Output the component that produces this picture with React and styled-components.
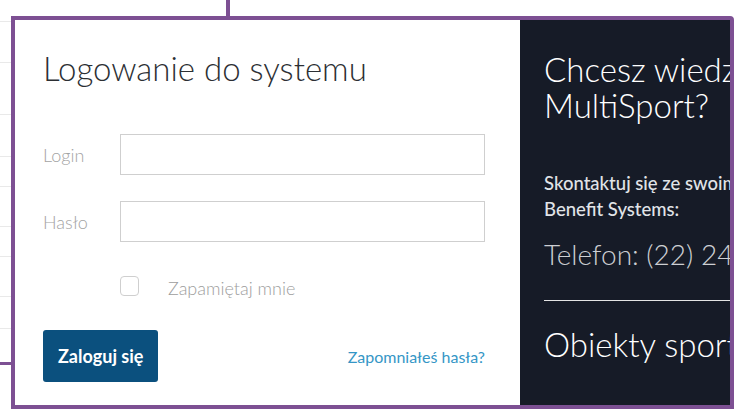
import React from "react";
import styled, { createGlobalStyle } from "styled-components";

const purple = "#7d5093";

const GlobalStyle = createGlobalStyle`
  html, body {
    margin: 0;
    padding: 0;
    background: #fff;
  }
  body {
    font-family: Lato, "Open Sans", "Liberation Sans", sans-serif;
  }
  * {
    box-sizing: border-box;
  }
`;

const rows = [22, 41, 52, 42, 30, 40, 30, 40, 32];

const App = () => (<>
  <GlobalStyle />
  <Page>
    <Strip>
      {rows.map((h, i) => <StripRow key={i} style={{ height: h }} />)}
    </Strip>
    <Frame>
      <LoginPane>
        <Title>Logowanie do systemu</Title>
        <Form onSubmit={e => e.preventDefault()}>
          <Field>
            <Label htmlFor="login">Login</Label>
            <Input id="login" type="text" />
          </Field>
          <Field>
            <Label htmlFor="haslo">Hasło</Label>
            <Input id="haslo" type="password" />
          </Field>
          <Remember>
            <Check type="checkbox" />
            <RememberText>Zapamiętaj mnie</RememberText>
          </Remember>
          <Actions>
            <Button type="submit">Zaloguj się</Button>
            <Link href="#">Zapomniałeś hasła?</Link>
          </Actions>
        </Form>
      </LoginPane>
      <InfoPane>
        <InfoTitle>Chcesz wiedzieć więcej o<br />MultiSport?</InfoTitle>
        <Contact>
          Skontaktuj się ze swoim opiekunem w<br />Benefit Systems:
        </Contact>
        <Phone>Telefon: (22) 242 42 42</Phone>
        <Divider />
        <InfoTitle as="h3" $gap={25}>Obiekty sportowe</InfoTitle>
      </InfoPane>
    </Frame>
    <VLine />
    <HLine />
  </Page>
</>);

const Page = styled.div`
  position: relative;
  display: flex;
  align-items: flex-start;
  width: 746px;
  height: 419px;
  overflow: hidden;
  background: #fff;
`;
const Strip = styled.div`
  display: flex;
  flex-direction: column;
  width: 11px;
  flex: none;
`;
const StripRow = styled.div`
  border-bottom: 1px solid #e9e9e9;
`;
const Frame = styled.div`
  display: flex;
  margin-top: 16px;
  width: 723px;
  height: 393px;
  border: 4px solid ${purple};
  border-top-right-radius: 4px;
  overflow: hidden;
  flex: none;
`;
const LoginPane = styled.div`
  width: 505px;
  flex: none;
  padding: 0 35px 0 28px;
  background: #fff;
`;
const Title = styled.h1`
  margin: 30px 0 0;
  font-size: 33px;
  line-height: 36px;
  font-weight: 300;
  color: #2c2f33;
  white-space: nowrap;
`;
const Form = styled.form`
  display: flex;
  flex-direction: column;
  width: 442px;
  margin-top: 48px;
`;
const Field = styled.div`
  display: flex;
  align-items: center;
  margin-bottom: 26px;
`;
const Label = styled.label`
  width: 77px;
  flex: none;
  font-size: 18px;
  line-height: 24px;
  font-weight: 300;
  color: #a3a3a3;
`;
const Input = styled.input`
  width: 365px;
  height: 41px;
  border: 1px solid #cfcfcf;
  border-radius: 0;
  padding: 0 10px;
  font: inherit;
  outline: none;
`;
const Remember = styled.label`
  display: flex;
  align-items: flex-start;
  margin: 8px 0 0 77px;
`;
const Check = styled.input`
  appearance: none;
  display: block;
  width: 19px;
  height: 20px;
  margin: 0 29px 0 0;
  border: 1px solid #cfcfcf;
  border-radius: 4px;
  background: #fff;
`;
const RememberText = styled.span`
  font-size: 18px;
  line-height: 24px;
  font-weight: 300;
  color: #9d9d9d;
`;
const Actions = styled.div`
  display: flex;
  align-items: center;
  justify-content: space-between;
  width: 442px;
  margin-top: 30px;
`;
const Button = styled.button`
  height: 52px;
  padding: 0 15px;
  border: none;
  border-radius: 3px;
  background: #0b507e;
  color: #fff;
  font-family: inherit;
  font-size: 18px;
  font-weight: 700;
  cursor: pointer;
`;
const Link = styled.a`
  font-size: 16px;
  color: #3596c6;
  text-decoration: none;
`;
const InfoPane = styled.div`
  flex: 1;
  padding: 0 0 0 24px;
  background: #161b27;
  color: #fff;
  overflow: hidden;
  white-space: nowrap;
`;
const InfoTitle = styled.h2`
  margin: ${p => p.$gap || 31}px 0 0;
  font-size: 33px;
  line-height: 36px;
  font-weight: 300;
  color: #fff;
`;
const Contact = styled.p`
  margin: 47px 0 0;
  font-size: 18.5px;
  line-height: 26px;
  font-weight: 500;
  color: #e1e4e8;
`;
const Phone = styled.p`
  margin: 16px 0 0;
  font-size: 28px;
  line-height: 32px;
  font-weight: 300;
  color: #cdcfd3;
`;
const Divider = styled.hr`
  margin: 30px 0 0;
  border: none;
  border-top: 1px solid #e4e4e4;
`;
const VLine = styled.div`
  position: absolute;
  left: 226px;
  top: 0;
  width: 4px;
  height: 17px;
  background: ${purple};
`;
const HLine = styled.div`
  position: absolute;
  left: 0;
  top: 362px;
  width: 12px;
  height: 3px;
  background: ${purple};
`;

export default App;
